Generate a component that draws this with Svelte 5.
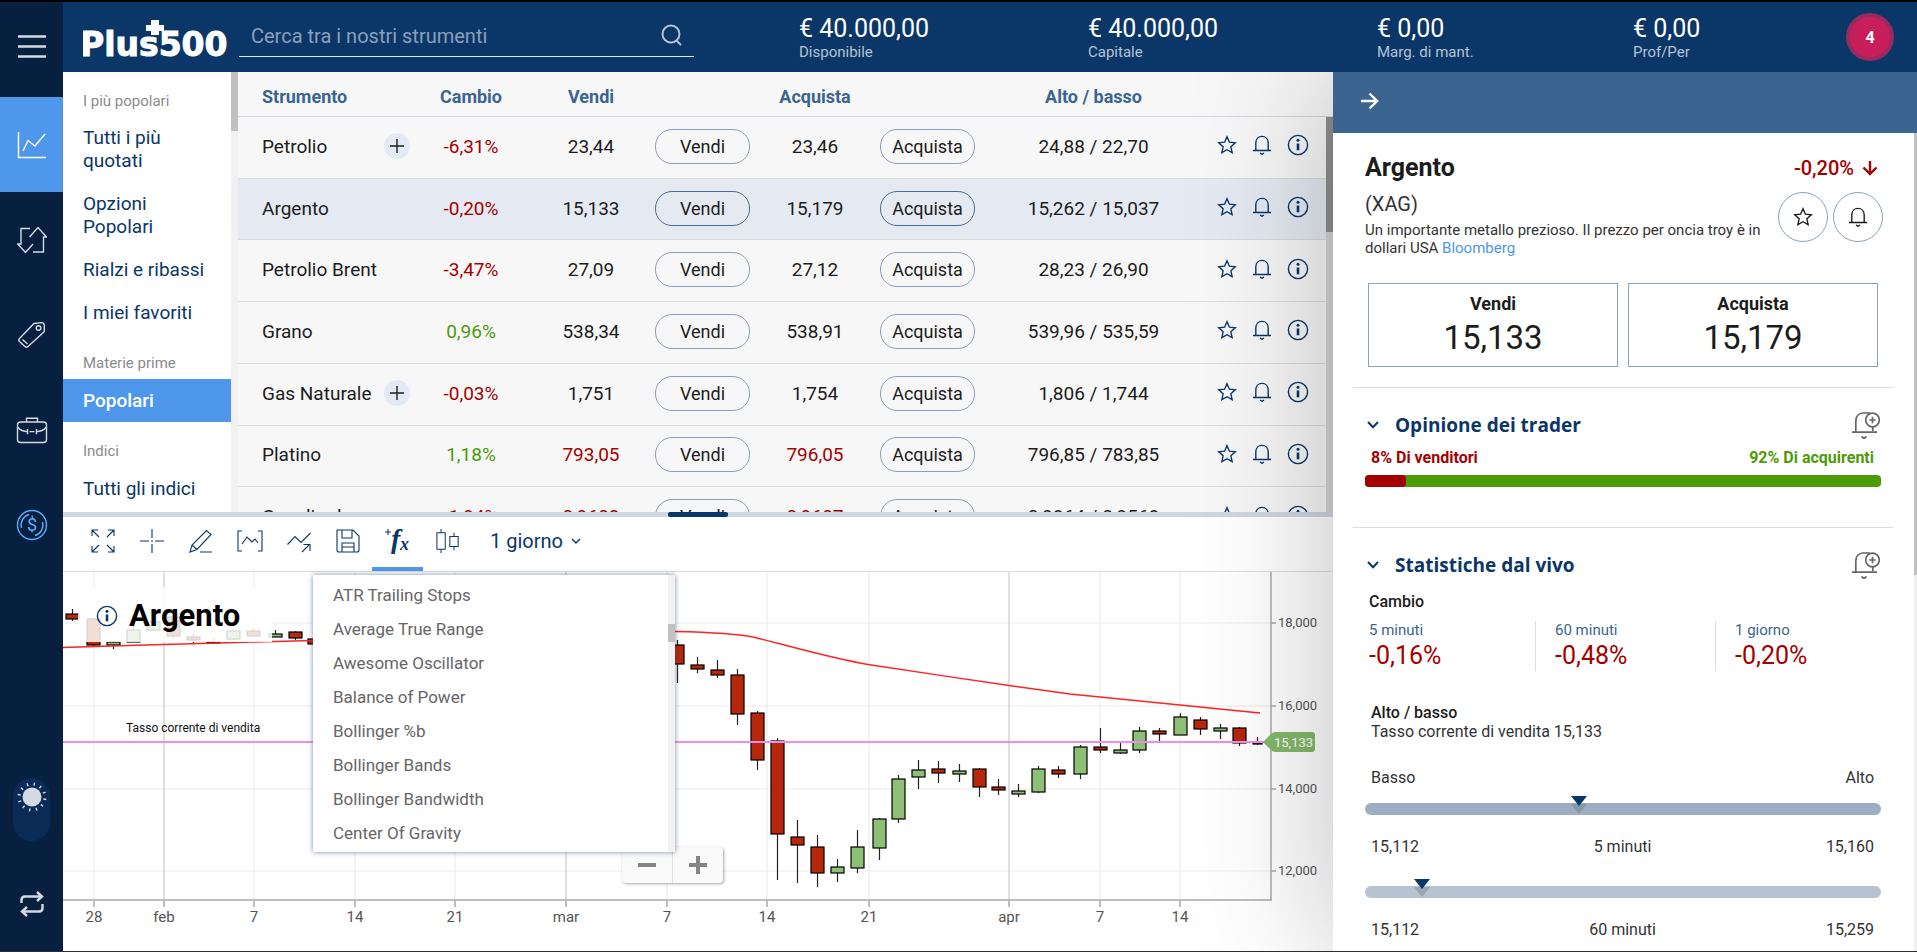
<script>
  const accounts = [
    { value: '€ 40.000,00', label: 'Disponibile' },
    { value: '€ 40.000,00', label: 'Capitale' },
    { value: '€ 0,00', label: 'Marg. di mant.' },
    { value: '€ 0,00', label: 'Prof/Per' }
  ];

  const categories = [
    { title: 'I più popolari', items: ['Tutti i più quotati', 'Opzioni Popolari', 'Rialzi e ribassi', 'I miei favoriti'] },
    { title: 'Materie prime', items: ['Popolari'] },
    { title: 'Indici', items: ['Tutti gli indici'] }
  ];

  let selectedCategory = $state('Popolari');
  let selectedRow = $state('Argento');

  const rows = [
    { name: 'Petrolio', more: true, change: '-6,31%', sell: '23,44', buy: '23,46', range: '24,88 / 22,70' },
    { name: 'Argento', change: '-0,20%', sell: '15,133', buy: '15,179', range: '15,262 / 15,037' },
    { name: 'Petrolio Brent', change: '-3,47%', sell: '27,09', buy: '27,12', range: '28,23 / 26,90' },
    { name: 'Grano', change: '0,96%', sell: '538,34', buy: '538,91', range: '539,96 / 535,59' },
    { name: 'Gas Naturale', more: true, change: '-0,03%', sell: '1,751', buy: '1,754', range: '1,806 / 1,744' },
    { name: 'Platino', change: '1,18%', sell: '793,05', buy: '796,05', range: '796,85 / 783,85', falling: true },
    { name: 'Gasolio da', change: '-1,94%', sell: '0,9602', buy: '0,9607', range: '0,9864 / 0,9568', falling: true }
  ];

  const indicators = [
    'ATR Trailing Stops', 'Average True Range', 'Awesome Oscillator', 'Balance of Power',
    'Bollinger %b', 'Bollinger Bands', 'Bollinger Bandwidth', 'Center Of Gravity'
  ];

  // Each candle: centre, body top, body bottom, wick top, wick bottom, rising (1) or falling (0)
  const candles = [
    [72, 614, 619, 609, 621, 0], [93, 619, 645, 619, 646, 0], [113, 642, 645, 641, 649, 1],
    [133, 630, 642, 625, 642, 1], [153, 622, 630, 619, 631, 1], [173, 617, 636, 617, 638, 0],
    [193, 637, 640, 633, 643, 0], [213, 642, 643, 639, 643, 0], [233, 631, 639, 629, 640, 1],
    [253, 631, 636, 629, 637, 0], [275, 634, 637, 630, 637, 1], [295, 632, 638, 631, 640, 0],
    [314, 639, 644, 638, 645, 0], [677, 645, 664, 640, 683, 0], [697, 665, 669, 657, 673, 0],
    [717, 670, 675, 660, 678, 0], [737, 675, 714, 669, 725, 0], [757, 713, 760, 711, 770, 0],
    [777, 741, 834, 738, 880, 0], [797, 837, 845, 820, 883, 0], [817, 847, 873, 835, 887, 0],
    [837, 867, 873, 859, 882, 1], [857, 847, 868, 830, 873, 1], [879, 819, 848, 818, 860, 1],
    [898, 779, 819, 775, 823, 1], [918, 770, 777, 760, 789, 1], [938, 769, 773, 761, 783, 0],
    [959, 771, 774, 764, 782, 1], [979, 769, 787, 768, 797, 0], [998, 787, 790, 779, 795, 0],
    [1018, 791, 794, 784, 797, 1], [1038, 769, 792, 766, 793, 1], [1058, 770, 774, 766, 778, 0],
    [1080, 747, 774, 745, 779, 1], [1100, 747, 750, 728, 753, 0], [1120, 750, 753, 743, 754, 1],
    [1139, 731, 750, 727, 753, 1], [1159, 731, 734, 728, 742, 0], [1180, 717, 735, 713, 735, 1],
    [1200, 720, 729, 717, 735, 0], [1220, 728, 731, 724, 739, 1], [1239, 728, 743, 727, 746, 0]
  ];

  const dates = [
    [94, '28'], [164, 'feb', 1], [254, '7'], [355, '14'], [455, '21'], [566, 'mar', 1],
    [667, '7'], [767, '14'], [869, '21'], [1009, 'apr', 1], [1100, '7'], [1180, '14']
  ];
  const prices = [[623, '18,000'], [706, '16,000'], [789, '14,000'], [871, '12,000']];

  const changes = [
    { label: '5 minuti', value: '-0,16%' },
    { label: '60 minuti', value: '-0,48%' },
    { label: '1 giorno', value: '-0,20%' }
  ];
  const ranges = [
    { low: '15,112', period: '5 minuti', high: '15,160', at: 41.4, tone: '#9dadc3' },
    { low: '15,112', period: '60 minuti', high: '15,259', at: 11.1, tone: '#b6c3d1' }
  ];
  const rays = Array.from({ length: 12 }, (_, i) => i * 30 + 10);
</script>

{#snippet star()}
  <svg viewBox="0 0 20 20" width="20" height="20"><path d="M10 1.8l2.4 5.4 5.9.6-4.4 4 1.2 5.8L10 14.7l-5.1 2.9 1.2-5.8-4.4-4 5.9-.6z" /></svg>
{/snippet}
{#snippet bell()}
  <svg viewBox="0 0 20 20" width="20" height="20"><path d="M1 15.5h18M3.8 15.3V8c0-4 2.7-6.6 6.2-6.6S16.2 4 16.2 8v7.3M8 18l2 1.3 2-1.3" /></svg>
{/snippet}
{#snippet info()}
  <svg viewBox="0 0 22 22" width="22" height="22"><circle cx="11" cy="11" r="9.6" /><path d="M11 9.5v6.8" stroke-width="2.6" /><circle class="dot" cx="11" cy="6.3" r="1.5" /></svg>
{/snippet}
{#snippet bellPlus()}
  <svg viewBox="0 0 28 28" width="28" height="28"><path d="M0 21.200h25M3.800 21V10.500C3.800 5.500 6.600 2 11 2h7M20.800 15.500V20M9.500 25.500l2.500 2 2.500-2" /><circle cx="20.500" cy="9" r="6.800" /><path d="M20.500 5.800v6.400M17.300 9h6.400" /></svg>
{/snippet}
{#snippet sectionHead(title)}
  <header class="section-head">
    <button class="plain chevron" aria-label={title}>
      <svg viewBox="0 0 12 12" width="12" height="12"><path d="M1 3l5 5.200L11 3" /></svg>
    </button>
    <h2>{title}</h2>
    <button class="plain alert" aria-label="Avviso">{@render bellPlus()}</button>
  </header>
{/snippet}

<div class="app">
  <nav class="rail">
    <button class="rail-item" aria-label="Menu">
      <svg viewBox="0 0 28 24" width="28" height="24"><path d="M0 2.500h28M0 12.500h28M0 22.500h28" stroke-width="2.600" /></svg>
    </button>
    <button class="rail-item on" aria-label="Trading">
      <svg viewBox="0 0 30 28" width="30" height="28"><path d="M1.500 1v25.500H29M6 20l5-10.500 7 5.500L28 3" /></svg>
    </button>
    <button class="rail-item" aria-label="Ordini">
      <svg viewBox="0 0 30 28" width="30" height="28"><path d="M13 2.500H4V18H.8l7.700 8.500 7.500-8.500M16 26h10.500V11h3l-8.500-9.500-8.500 9.500" /></svg>
    </button>
    <button class="rail-item" aria-label="Posizioni chiuse">
      <svg viewBox="0 0 30 28" width="30" height="28"><path d="M17 2.500l7.500-.9c1.500 0 2.600 1.200 2.800 2.600l-.1 6.500L11 25.500c-1 .9-2 .9-3 0l-5.500-5c-1-1-1-2 0-3zM5.500 18.500l5 4.500" /><circle cx="21.500" cy="7" r="2.300" /></svg>
    </button>
    <button class="rail-item" aria-label="Portafoglio">
      <svg viewBox="0 0 32 28" width="32" height="28"><rect x="1.500" y="6" width="29" height="20.500" rx="3" /><path d="M10.500 6V2.200h11V6M1.500 11c3 3.500 6.500 4.600 10 4.600M30.500 11c-3 3.500-6.500 4.600-10 4.600M13.500 15.600h5M11.500 13v5.200M20.500 13v5.200" /></svg>
    </button>
    <button class="rail-item coin" aria-label="Fondi">
      <svg viewBox="0 0 32 32" width="32" height="32"><circle cx="16" cy="16" r="14.500" /><path d="M5.500 19A11 11 0 0 1 13 5.500M26.500 13A11 11 0 0 1 19 26.500" /><text x="16" y="22" text-anchor="middle">$</text></svg>
    </button>
    <div class="rail-end">
      <button class="theme" aria-label="Tema">
        <svg viewBox="0 0 30 30" width="30" height="30">
          <circle class="sun" cx="15" cy="15" r="9.500" />
          {#each rays as a}<path d="M15 .5v3" transform="rotate({a} 15 15)" />{/each}
        </svg>
      </button>
      <button class="swap" aria-label="Cambia conto">
        <svg viewBox="0 0 24 26" width="24" height="26"><path d="M1.500 12V9c0-2 1.300-3.500 3.500-3.500h16.500M17 1l5 4.500-5 4.500M22.500 13v4c0 2-1.300 3.500-3.500 3.500H2.500M7 16l-5 4.500L7 25" /></svg>
      </button>
    </div>
  </nav>

  <div class="page">
    <header class="top">
      <a class="logo" href="#home" aria-label="Plus500">
        <svg viewBox="0 0 150 44" width="150" height="44">
          <text x="-3" y="38">Plus500</text>
          <path d="M68 2h8v5h5v6h-5v4h-8v-4h-5V7h5z" />
        </svg>
      </a>
      <form class="search">
        <input type="search" aria-label="Cerca" placeholder="Cerca tra i nostri strumenti" />
        <button class="plain" type="button" aria-label="Avvia ricerca">
          <svg viewBox="0 0 22 22" width="22" height="22"><circle cx="10" cy="10" r="8.500" /><path d="M15.500 16.500l4.500 4.500" /></svg>
        </button>
      </form>
      {#each accounts as a}
        <div class="account"><strong>{a.value}</strong><span>{a.label}</span></div>
      {/each}
      <button class="badge">4</button>
    </header>

    <div class="work">
      <main>
        <div class="market">
          <nav class="categories">
            <div class="category-list">
              {#each categories as group}
                <h3>{group.title}</h3>
                {#each group.items as item}
                  <button class:selected={item === selectedCategory} onclick={() => (selectedCategory = item)}><span>{item}</span></button>
                {/each}
              {/each}
            </div>
            <div class="track"><div class="thumb"></div></div>
          </nav>

          <div class="quotes">
            <table class="titles">
              <colgroup><col class="c1" /><col class="c2" /><col class="c3" /><col class="c4" /><col class="c5" /><col class="c4" /><col class="c7" /><col class="c8" /></colgroup>
              <thead>
                <tr><th class="left">Strumento</th><th>Cambio</th><th>Vendi</th><th></th><th>Acquista</th><th></th><th>Alto / basso</th><th></th></tr>
              </thead>
            </table>
            <div class="scroll">
              <table>
                <colgroup><col class="c1" /><col class="c2" /><col class="c3" /><col class="c4" /><col class="c5" /><col class="c4" /><col class="c7" /><col class="c8" /></colgroup>
                <tbody>
                  {#each rows as r}
                    <tr class:selected={r.name === selectedRow} onclick={() => (selectedRow = r.name)}>
                      <td class="left">
                        <div class="name">{r.name}{#if r.more}<button class="more" aria-label="Altri contratti"><svg viewBox="0 0 14 14" width="14" height="14"><path d="M7 0v14M0 7h14" /></svg></button>{/if}</div>
                      </td>
                      <td class={r.change[0] === '-' ? 'down' : 'up'}>{r.change}</td>
                      <td class:down={r.falling}>{r.sell}</td>
                      <td><button class="trade">Vendi</button></td>
                      <td class:down={r.falling}>{r.buy}</td>
                      <td><button class="trade">Acquista</button></td>
                      <td>{r.range}</td>
                      <td>
                        <div class="tools">
                          <button class="plain" aria-label="Preferito">{@render star()}</button>
                          <button class="plain" aria-label="Avviso">{@render bell()}</button>
                          <button class="plain" aria-label="Dettagli">{@render info()}</button>
                        </div>
                      </td>
                    </tr>
                  {/each}
                </tbody>
              </table>
              <div class="track"><div class="thumb"></div></div>
            </div>
          </div>
        </div>

        <div class="splitter"><span></span></div>

        <section class="chart">
          <div class="toolbar">
            <button aria-label="Schermo intero"><svg viewBox="0 0 24 24"><path d="M1 7V1h6M1 1l7 7M17 1h6v6M23 1l-7 7M1 17v6h6M1 23l7-7M17 23h6v-6M23 23l-7-7" /></svg></button>
            <button aria-label="Mirino"><svg viewBox="0 0 24 24"><path d="M12 0v9M12 15v9M0 12h9M15 12h9M11 12h2" /></svg></button>
            <button aria-label="Disegna"><svg viewBox="0 0 24 24"><path d="M1 23l2-7L17.500 1.500l4.500 4L8 20.500zM3 16l5 4.500M11 23h12" /></svg></button>
            <button aria-label="Intervallo"><svg viewBox="0 0 26 24"><path d="M5 2H1v20h4M21 2h4v20h-4M5 15l5-7 5 5 3-3 3 4" /></svg></button>
            <button aria-label="Tendenza"><svg viewBox="0 0 24 24"><path d="M.5 15.500l7.500-8 6 6L23.500 4M15 23l7-7M16.500 15.500H23V22" /></svg></button>
            <button aria-label="Salva"><svg viewBox="0 0 24 24"><path d="M1 1h16l6 6v14c0 1-1 2-2 2H3c-1 0-2-1-2-2zM6 1v8h10V1M6 23v-9h12v9M6 18h12" /></svg></button>
            <button class="current" aria-label="Indicatori"><svg viewBox="0 0 26 24"><text class="f" x="6" y="19">f</text><text class="x" x="15" y="21">x</text><path d="M3 0v6M0 3h6" /></svg></button>
            <button aria-label="Tipo di grafico"><svg viewBox="0 0 26 26"><path d="M1 4h9v18H1zM5.500 0v4M5.500 22v4M15 8h9v11h-9zM19.500 4v4M19.500 19v4" /></svg></button>
            <button class="period">1 giorno<svg viewBox="0 0 10 10"><path d="M1 3l4 4 4-4" /></svg></button>
          </div>

          <div class="plot">
            <svg class="canvas" viewBox="63 572 1270 379" preserveAspectRatio="xMinYMin meet">
              {#each prices as [y]}<path class="grid" d="M64 {y}H1271" />{/each}
              {#each dates as [x, , month]}
                <path class="grid" class:month d="M{x} 572V900" />
                <path class="axis" d="M{x} 901v6" />
              {/each}
              {#each candles as [x, top, bottom, high, low, rising]}
                <path class="wick" d="M{x + 0.5} {high}V{low}" />
                <rect class={rising ? 'rise' : 'fall'} x={x - 6} y={top} width="13" height={Math.max(bottom - top, 1)} />
              {/each}
              <path class="wick" d="M1257.500 737V745" />
              <rect class="fall" x="1253" y="742.500" width="9" height="1.500" />
              <path class="average" d="M63 647.500L94 646.500 164 644.500 253 642 275 641.500 313 640.500M675 631.500C700 632 735 633 755 637.500 790 646 830 658 868 664.500 910 671 965 679 1009 685.500L1070 694 1180 705 1220 709 1260 713" />
              <path class="rate" d="M63 742H1271" />
              <path class="axis" d="M63 900H1272M1271 572V900" />
              {#each dates as [x, label]}<text class="date" {x} y="922">{label}</text>{/each}
              {#each prices as [y, label]}
                <path class="axis" d="M1271 {y}h5" />
                <text class="price" x="1278" y={y + 4}>{label}</text>
              {/each}
              <text class="rate-label" x="126" y="732">Tasso corrente di vendita</text>
              <path class="tag" d="M1263 742l9-9q2-1 4-1h36q3 0 3 3v14q0 3-3 3h-36q-2 0-4-1z" />
              <text class="tag-label" x="1274" y="747">15,133</text>
            </svg>

            <div class="caption">{@render info()}<h1>Argento</h1></div>

            <div class="zoomer">
              <button aria-label="Riduci"><svg viewBox="0 0 20 20" width="20" height="20"><path d="M1 10h18" /></svg></button>
              <button aria-label="Ingrandisci"><svg viewBox="0 0 20 20" width="20" height="20"><path d="M1 10h18M10 1v18" /></svg></button>
            </div>

            <div class="menu">
              <ul>
                {#each indicators as name}<li><button>{name}</button></li>{/each}
              </ul>
              <div class="track"><div class="thumb"></div></div>
            </div>
          </div>
        </section>
      </main>

      <aside>
        <div class="aside-bar">
          <button class="plain" aria-label="Chiudi"><svg viewBox="0 0 18 18" width="18" height="18"><path d="M0 9h16M8.500 1.500L16.200 9l-7.700 7.500" /></svg></button>
        </div>
        <div class="aside-body">
          <section class="summary">
            <div class="line">
              <h2>Argento</h2>
              <span class="move">-0,20%<svg viewBox="0 0 16 16" width="16" height="16"><path d="M8 1v13M1.500 7.500L8 14l6.500-6.500" /></svg></span>
            </div>
            <div class="about">
              <div>
                <p class="code">(XAG)</p>
                <p class="desc">Un importante metallo prezioso. Il prezzo per oncia troy è in dollari USA <a href="#bloomberg">Bloomberg</a></p>
              </div>
              <div class="rounds">
                <button aria-label="Preferito">{@render star()}</button>
                <button aria-label="Avviso">{@render bell()}</button>
              </div>
            </div>
            <div class="deals">
              <button><b>Vendi</b><span>15,133</span></button>
              <button><b>Acquista</b><span>15,179</span></button>
            </div>
          </section>

          <section class="opinion">
            {@render sectionHead('Opinione dei trader')}
            <div class="shares"><span class="down">8% Di venditori</span><span class="up">92% Di acquirenti</span></div>
            <div class="split"><div style="width: 8%"></div></div>
          </section>

          <section class="stats">
            {@render sectionHead('Statistiche dal vivo')}
            <h4>Cambio</h4>
            <div class="changes">
              {#each changes as c}<div><span>{c.label}</span><b>{c.value}</b></div>{/each}
            </div>
            <div class="current-rate"><b>Alto / basso</b><span>Tasso corrente di vendita 15,133</span></div>
            <div class="ends"><span>Basso</span><span>Alto</span></div>
            {#each ranges as r}
              <div class="range" style="background: {r.tone}">
                <svg viewBox="0 0 16 18" width="16" height="18" style="left: {r.at}%"><path class="ghost" d="M0 8h16l-8 10z" /><path d="M0 0h16L8 10z" /></svg>
              </div>
              <div class="range-labels"><span>{r.low}</span><span>{r.period}</span><span>{r.high}</span></div>
            {/each}
          </section>
        </div>
        <div class="track aside-track"><div class="thumb"></div></div>
      </aside>
    </div>
  </div>
</div>

<style>
  :global(body) { margin: 0; }
  * { box-sizing: border-box; }
  .app {
    display: flex;
    height: 100vh;
    border-top: 2px solid #000;
    border-bottom: 1px solid #2c2c2c;
    overflow: hidden;
    background: #fff;
    color: #1c1c1c;
    font-family: Roboto, "Liberation Sans", sans-serif;
    font-size: 18px;
  }
  h1, h2, h3, h4, p, ul { margin: 0; padding: 0; font-weight: 400; }
  button, input { font: inherit; color: inherit; }
  button { margin: 0; padding: 0; border: 0; background: none; cursor: pointer; }
  svg { display: block; fill: none; stroke: currentColor; stroke-width: 1.4; flex: none; }
  svg text { stroke: none; fill: currentColor; }
  .dot { fill: currentColor; stroke: none; }
  .plain { display: flex; }
  .down { color: #a50000; }
  .up { color: #4c9b07; }

  .rail { flex: 0 0 63px; display: flex; flex-direction: column; background: #07203f; color: #d3dae2; }
  .rail-item { flex: 0 0 95px; display: flex; align-items: center; justify-content: center; }
  .rail-item:first-child { padding-bottom: 8px; }
  .rail-item.on { background: #4e97ea; color: #fff; }
  .rail-item.coin { color: #5fa9f6; }
  .coin text { font-size: 18px; }
  .rail-end { margin-top: auto; padding-bottom: 34px; display: flex; flex-direction: column; align-items: center; gap: 50px; }
  .theme { width: 37px; height: 63px; border-radius: 19px; background: #0b2b57; display: flex; justify-content: center; padding-top: 4px; }
  .sun { fill: #d3dae2; stroke: none; }
  .swap svg { stroke-width: 2.4; }

  .page { flex: 1; min-width: 0; display: flex; flex-direction: column; }
  .top {
    position: relative;
    z-index: 2;
    flex: 0 0 70px;
    display: grid;
    grid-template-columns: 156px minmax(200px, 455px) 289px 289px 256px 1fr auto;
    padding: 0 23px 0 20px;
    background: #0b3668;
    color: #fff;
  }
  .account { margin-left: 105px; margin-right: -105px; padding-top: 12px; }
  .account strong { display: block; font-size: 25px; line-height: 29px; font-weight: 400; white-space: nowrap; }
  .account span { display: block; font-size: 15px; line-height: 18px; color: #b6c3d2; }
  .logo { color: #fff; padding-top: 16px; }
  .logo text { font-family: "DejaVu Sans", sans-serif; font-size: 33px; font-weight: 700; stroke: #fff; stroke-width: 1; }
  .logo path { fill: #fff; stroke: none; }
  .search { display: flex; align-items: center; height: 55px; padding: 0 11px 0 12px; border-bottom: 1px solid #dfe6ee; color: #b6c3d2; }
  .search input { flex: 1; min-width: 0; height: 30px; padding: 0; margin-top: 14px; border: 0; outline: 0; background: none; font-size: 20px; }
  .search input::placeholder { color: #8ba0ba; opacity: 1; }
  .search button { margin-top: 12px; }
  .search svg { stroke-width: 2; }
  .badge { align-self: center; width: 48px; height: 48px; border: 4px solid #992a60; border-radius: 50%; background: #c91e5c; font-size: 16px; font-weight: 700; }

  .work { flex: 1; min-height: 0; display: flex; }
  main { flex: 1; min-width: 0; display: flex; flex-direction: column; }
  .market { flex: 440 1 0; min-height: 0; display: flex; overflow: hidden; }
  .track { background: #f1f1f1; }
  .thumb { background: #c1c1c1; }

  .categories { flex: 0 0 175px; display: flex; overflow: hidden; }
  .category-list { flex: 1; color: #0b3668; font-size: 19px; }
  .category-list h3 { padding: 18px 20px 5px; font-size: 15px; line-height: 22px; color: #8b8b8b; }
  .category-list h3:first-child { padding-bottom: 4px; }
  .category-list button { display: block; width: 100%; padding: 10px 0 10px 20px; line-height: 23px; text-align: left; }
  .category-list button span { display: block; max-width: 100px; }
  .category-list button:nth-child(n + 4) span { max-width: none; }
  .category-list .selected { background: #4e97ea; color: #fff; font-weight: 500; }
  .categories .track { flex: 0 0 7px; }
  .categories .thumb { height: 59px; }

  .quotes { flex: 1; min-width: 0; display: flex; flex-direction: column; background: #f7f7f7; }
  table { width: 100%; table-layout: fixed; border-collapse: separate; border-spacing: 0; }
  .titles { flex: none; }
  .c1 { width: 172px; } .c2 { width: 122px; } .c3 { width: 118px; } .c4 { width: 105px; }
  .c5 { width: 120px; } .c7 { width: 227px; } .c8 { width: 119px; }
  .titles .c8 { width: 126px; }
  th { height: 45px; padding: 4px 0 0; color: #3b6490; font-weight: 700; border-bottom: 1px solid #cdd7e3; }
  .scroll { flex: 1; min-height: 0; display: flex; overflow: hidden; }
  .scroll table { flex: 1; align-self: flex-start; height: 432px; font-size: 19px; }
  .scroll .track { flex: 0 0 7px; background: #d4d4d4; }
  .scroll .thumb { height: 115px; background: #8f8f8f; }
  td { height: 61px; padding: 0 0 2px; text-align: center; border-bottom: 1px solid #dcdcdc; white-space: nowrap; }
  tr.selected { background: #e5eaf2; }
  .left { text-align: left; padding-left: 24px; }
  .name { display: flex; align-items: center; justify-content: space-between; }
  .more { width: 26px; height: 26px; border-radius: 50%; background: #e3eaf5; display: flex; align-items: center; justify-content: center; }
  .trade { width: 95px; height: 35px; border: 1px solid #8ba0ba; border-radius: 17px; font-size: 18px; }
  .selected .trade { border-color: #4d6c95; }
  .tools { display: flex; align-items: center; gap: 15px; padding: 0 0 2px 10px; color: #0b3668; }

  .splitter { flex: 0 0 5px; background: #cfd7e1; }
  .splitter span { display: block; width: 60px; height: 5px; margin-left: 605px; border-radius: 2px; background: #0b3668; }
  .chart { flex: 434 1 0; min-height: 0; display: flex; flex-direction: column; }
  .toolbar { flex: 0 0 55px; display: flex; padding-left: 15px; border-bottom: 1px solid #dcdcdc; color: #0b3668; }
  .toolbar button { width: 49px; display: flex; align-items: center; justify-content: center; border-bottom: 4px solid transparent; padding-bottom: 2px; }
  .toolbar button:not(.period) svg { width: 26px; height: 24px; stroke-width: 1.1; }
  .toolbar .current { width: 51px; border-bottom-color: #4e97ea; }
  .toolbar .current svg { overflow: visible; }
  .toolbar .f { font: italic 700 28px "Liberation Serif", serif; }
  .toolbar .x { font: italic 700 18px "Liberation Serif", serif; }
  .toolbar .period { width: auto; gap: 8px; margin-left: 18px; font-size: 20px; }
  .period svg { width: 10px; height: 10px; }

  .plot { position: relative; flex: 1; min-height: 0; }
  .canvas { width: 100%; height: 100%; }
  .grid { stroke: #ececec; stroke-width: 1.200; }
  .month { stroke: #cacaca; }
  .axis { stroke: #a9a9a9; stroke-width: 1.500; }
  .wick { stroke: #222; stroke-width: 1.200; }
  .rise { fill: #8ebf76; stroke: #000; stroke-width: 1.200; }
  .fall { fill: #b7270c; stroke: #000; stroke-width: 1.200; }
  .average { stroke: #f22; stroke-width: 1.400; }
  .rate { stroke: #ee8dec; stroke-width: 2; }
  .tag { fill: #85b86c; stroke: none; }
  .canvas text { font-size: 13px; fill: #555; }
  .canvas .date { font-size: 15px; text-anchor: middle; }
  .canvas .rate-label { font-size: 12px; fill: #111; }
  .canvas .tag-label { fill: #fff; }
  .caption { position: absolute; left: 15px; top: 15px; width: 194px; height: 55px; padding: 2px 0 0 18px; display: flex; align-items: center; gap: 11px; color: #0b3668; background: rgba(255, 255, 255, 0.84); }
  .caption h1 { font-size: 31px; font-weight: 700; color: #000; }
  .zoomer { position: absolute; left: 559px; top: 275px; width: 101px; height: 36px; display: flex; border-radius: 4px; background: #fafafa; box-shadow: 1px 1px 3px rgba(0, 0, 0, 0.35); color: #858585; }
  .zoomer button { flex: 1; display: flex; align-items: center; justify-content: center; }
  .zoomer button + button { border-left: 1px solid #e0e0e0; }
  .zoomer svg { stroke-width: 4; }
  .menu { position: absolute; left: 250px; top: 3px; width: 362px; display: flex; background: #fff; box-shadow: 0 0 5px rgba(30, 60, 100, 0.6); color: #666; }
  .menu ul { flex: 1; padding: 3px 0 2px; list-style: none; }
  .menu li button { display: block; width: 100%; padding: 0 20px; line-height: 34px; font-size: 17px; text-align: left; }
  .menu .track { flex: 0 0 7px; padding-top: 49px; }
  .menu .thumb { height: 18px; }

  aside { position: relative; z-index: 1; flex: 0 0 584px; display: grid; grid-template: 61px minmax(0, 1fr) / minmax(0, 1fr) 3px; background: #fff; box-shadow: 0 0 130px rgba(0, 0, 0, 0.26); }
  .aside-bar { grid-column: 1 / 3; display: flex; align-items: center; padding: 0 28px 4px; background: #3b6490; color: #fff; }
  .aside-bar svg { stroke-width: 2.400; }
  .aside-body { padding: 0 21px 0 20px; overflow: hidden; }
  .aside-track .thumb { height: 442px; }
  .aside-body section { padding: 0 12px; }
  .aside-body section + section { border-top: 1px solid #dcdcdc; }
  .summary { height: 254px; }
  .line { display: flex; justify-content: space-between; align-items: center; padding: 20px 3px 0 0; height: 49px; }
  .line h2 { font-size: 25px; font-weight: 700; }
  .move { display: flex; align-items: center; gap: 8px; font-size: 20px; font-weight: 500; color: #a50000; }
  .move svg { stroke-width: 2.400; }
  .about { display: flex; justify-content: space-between; padding-top: 10px; height: 101px; }
  .about > div:first-child { width: 405px; }
  .code { font-size: 20px; line-height: 24px; }
  .desc { padding-top: 5px; font-size: 15px; line-height: 18px; }
  .code, .desc { color: #333; }
  a { color: #4e97ea; text-decoration: none; }
  .rounds { display: flex; gap: 5px; margin-right: -2px; }
  .rounds button { width: 50px; height: 50px; border: 1px solid #8ba0ba; border-radius: 50%; display: flex; align-items: center; justify-content: center; }
  .deals { display: grid; grid-template-columns: 1fr 1fr; gap: 10px; padding: 0 3px; }
  .deals button { height: 84px; padding-top: 2px; border: 1px solid #8ba0ba; }
  .deals b { display: block; line-height: 24px; font-weight: 700; }
  .deals span { display: block; font-size: 33px; line-height: 44px; }

  .opinion { height: 140px; }
  .section-head { display: flex; align-items: center; height: 26px; margin-top: 24px; color: #0b3668; }
  .section-head h2 { flex: 1; padding-left: 16px; font: 700 19px/26px "Open Sans", sans-serif; }
  .chevron { padding-left: 2px; }
  .chevron svg { stroke-width: 2; }
  .alert { color: #666; margin-right: 1px; }
  .alert svg { stroke-width: 1.700; }
  .shares { display: flex; justify-content: space-between; padding: 0 7px 0 6px; margin-top: 9px; font-size: 16px; line-height: 22px; font-weight: 700; }
  .split { height: 12px; margin-top: 6px; border-radius: 4px; background: #4c9b07; }
  .split div { height: 12px; border-radius: 4px; background: #a50000; }
  .stats h4 { padding: 14px 4px 0; font-size: 16px; line-height: 20px; font-weight: 500; }
  .changes { display: grid; grid-template-columns: 170px 180px 1fr; margin-top: 9px; }
  .changes div { height: 50px; padding-left: 19px; border-left: 1px solid #dcdcdc; }
  .changes div:first-child { padding-left: 4px; border: 0; }
  .changes span { display: block; font-size: 15px; line-height: 18px; color: #3b6490; }
  .changes b { display: block; font-size: 25px; line-height: 34px; font-weight: 400; color: #a50000; }
  .current-rate { padding: 32px 6px 0; font-size: 16px; line-height: 19px; }
  .current-rate b, .current-rate span { display: block; }
  .current-rate span, .ends, .range-labels { color: #333; }
  .current-rate b { font-weight: 500; }
  .ends, .range-labels { display: flex; justify-content: space-between; padding: 0 7px 0 6px; font-size: 16px; line-height: 20px; }
  .ends { margin-top: 27px; }
  .range { position: relative; height: 12px; margin-top: 15px; border-radius: 6px; }
  .range svg { position: absolute; top: -7px; margin-left: -8px; fill: #0b3668; stroke: none; }
  .range .ghost { fill: rgba(90, 100, 110, 0.3); }
  .range-labels { margin: 22px 0 0; }
  .range-labels + .range { margin-top: 29px; }
</style>
